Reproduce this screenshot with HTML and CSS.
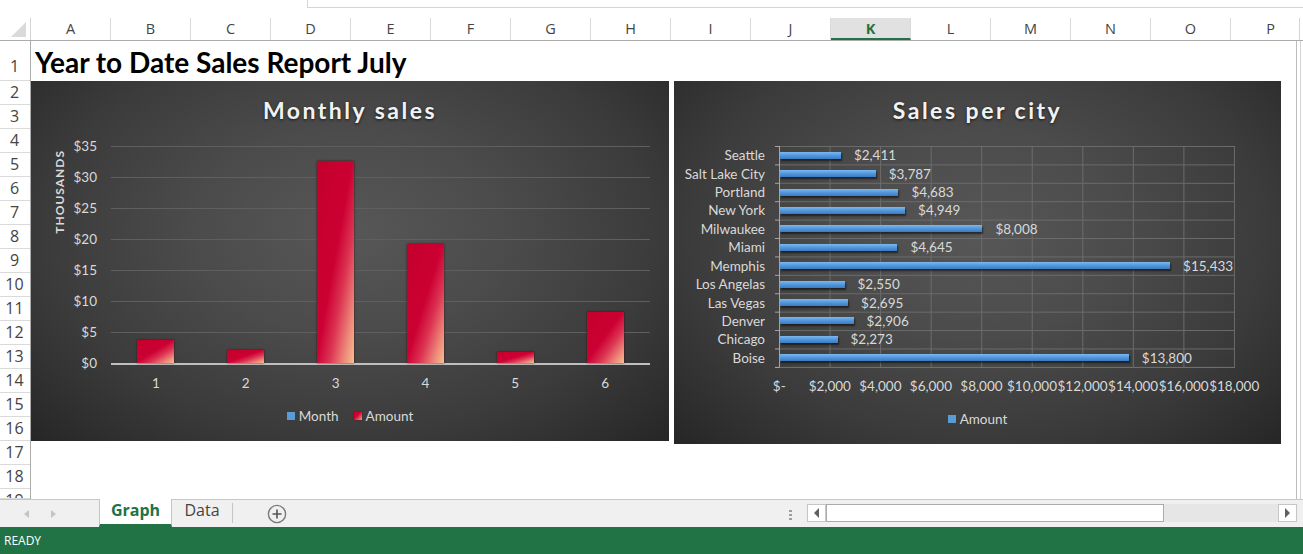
FILE: index.html
```html
<!DOCTYPE html>
<html lang="en">
<head>
<meta charset="utf-8">
<title>Year to Date Sales Report July</title>
<link rel="stylesheet" href="styles.css">
</head>
<body>
<div class="app">
  <div class="formula"><div class="formula-box"></div></div>

  <div class="colheads">
    <div class="corner"><span class="corner-tri"></span></div>
    <div class="cols">
      <div class="col">A</div><div class="col">B</div><div class="col">C</div><div class="col">D</div>
      <div class="col">E</div><div class="col">F</div><div class="col">G</div><div class="col">H</div>
      <div class="col">I</div><div class="col">J</div><div class="col sel">K</div><div class="col">L</div>
      <div class="col">M</div><div class="col">N</div><div class="col">O</div><div class="col">P</div>
    </div>
    <div class="vs-head"></div>
  </div>

  <div class="main">
    <div class="rowheads">
      <div class="rh r1">1</div><div class="rh">2</div><div class="rh">3</div><div class="rh">4</div>
      <div class="rh">5</div><div class="rh">6</div><div class="rh">7</div><div class="rh">8</div>
      <div class="rh">9</div><div class="rh">10</div><div class="rh">11</div><div class="rh">12</div>
      <div class="rh">13</div><div class="rh">14</div><div class="rh">15</div><div class="rh">16</div>
      <div class="rh">17</div><div class="rh">18</div><div class="rh rh-cut">19</div>
    </div>

    <div class="sheet">
      <div class="title-row">Year to Date Sales Report July</div>
      <div class="charts">
        <section class="chart chart-left">
          <h2 class="chart-title">Monthly sales</h2>
          <div class="lc-body">
            <div class="axis-title">THOUSANDS</div>
            <div class="y-labels">
              <span>$35</span><span>$30</span><span>$25</span><span>$20</span>
              <span>$15</span><span>$10</span><span>$5</span><span>$0</span>
            </div>
            <div class="lc-plot">
              <div class="slot"><div class="col-bar" style="height:23px"></div></div>
              <div class="slot"><div class="col-bar" style="height:13px"></div></div>
              <div class="slot"><div class="col-bar" style="height:202px"></div></div>
              <div class="slot"><div class="col-bar" style="height:119px"></div></div>
              <div class="slot"><div class="col-bar" style="height:11px"></div></div>
              <div class="slot"><div class="col-bar" style="height:51px"></div></div>
            </div>
          </div>
          <div class="lc-xlabels">
            <span>1</span><span>2</span><span>3</span><span>4</span><span>5</span><span>6</span>
          </div>
          <div class="legend">
            <span class="lg-item"><i class="sw sw-blue"></i>Month</span>
            <span class="lg-item"><i class="sw sw-red"></i>Amount</span>
          </div>
        </section>

        <section class="chart chart-right">
          <h2 class="chart-title">Sales per city</h2>
          <div class="rc-body">
            <div class="rc-cats">
              <span>Seattle</span><span>Salt Lake City</span><span>Portland</span><span>New York</span>
              <span>Milwaukee</span><span>Miami</span><span>Memphis</span><span>Los Angelas</span>
              <span>Las Vegas</span><span>Denver</span><span>Chicago</span><span>Boise</span>
            </div>
            <div class="rc-ticks"></div>
            <div class="rc-plot">
              <div class="rc-row"><div class="hbar" style="width:60.9px"></div><span class="val">$2,411</span></div>
              <div class="rc-row"><div class="hbar" style="width:95.7px"></div><span class="val">$3,787</span></div>
              <div class="rc-row"><div class="hbar" style="width:118.4px"></div><span class="val">$4,683</span></div>
              <div class="rc-row"><div class="hbar" style="width:125.1px"></div><span class="val">$4,949</span></div>
              <div class="rc-row"><div class="hbar" style="width:202.4px"></div><span class="val">$8,008</span></div>
              <div class="rc-row"><div class="hbar" style="width:117.4px"></div><span class="val">$4,645</span></div>
              <div class="rc-row"><div class="hbar" style="width:390.1px"></div><span class="val">$15,433</span></div>
              <div class="rc-row"><div class="hbar" style="width:64.5px"></div><span class="val">$2,550</span></div>
              <div class="rc-row"><div class="hbar" style="width:68.1px"></div><span class="val">$2,695</span></div>
              <div class="rc-row"><div class="hbar" style="width:73.5px"></div><span class="val">$2,906</span></div>
              <div class="rc-row"><div class="hbar" style="width:57.5px"></div><span class="val">$2,273</span></div>
              <div class="rc-row"><div class="hbar" style="width:348.8px"></div><span class="val">$13,800</span></div>
            </div>
          </div>
          <div class="rc-xlabels">
            <span>$-</span><span>$2,000</span><span>$4,000</span><span>$6,000</span><span>$8,000</span>
            <span>$10,000</span><span>$12,000</span><span>$14,000</span><span>$16,000</span><span>$18,000</span>
          </div>
          <div class="legend">
            <span class="lg-item"><i class="sw sw-blue"></i>Amount</span>
          </div>
        </section>
      </div>
    </div>

    <div class="vscroll"></div>
  </div>

  <div class="tabbar">
    <div class="tab-nav">
      <span class="nav-arrow nav-left"></span>
      <span class="nav-arrow nav-right"></span>
    </div>
    <div class="tab active">Graph</div>
    <div class="tab">Data</div>
    <div class="add-sheet">
      <svg width="20" height="20" viewBox="0 0 20 20" aria-hidden="true">
        <circle cx="10" cy="10" r="8.6" fill="none" stroke="#7a7a7a" stroke-width="1.4"/>
        <path d="M10 5.5v9M5.5 10h9" stroke="#555" stroke-width="1.6"/>
      </svg>
    </div>
    <div class="tab-spacer"></div>
    <div class="split-dots"></div>
    <div class="hscroll">
      <div class="hs-btn"><span class="hs-arrow hs-left"></span></div>
      <div class="hs-thumb"></div>
      <div class="hs-track"></div>
      <div class="hs-btn"><span class="hs-arrow hs-right"></span></div>
    </div>
  </div>

  <div class="status">READY</div>
</div>
</body>
</html>
```

FILE: styles.css
```css
* { box-sizing: border-box; }
html, body { margin: 0; padding: 0; }
body {
  width: 1303px;
  height: 554px;
  overflow: hidden;
  background: #fff;
  font-family: "Open Sans", "Noto Sans", "Liberation Sans", sans-serif;
  color: #444;
}
.app { display: flex; flex-direction: column; height: 554px; }

/* formula strip */
.formula { height: 18px; }
.formula-box {
  margin-left: 307px;
  height: 8px;
  border-left: 1px solid #d4d4d4;
  border-bottom: 1px solid #d4d4d4;
}

/* column headers */
.colheads {
  display: flex;
  height: 23px;
  border-bottom: 1px solid #ababab;
}
.corner {
  width: 31px;
  flex: none;
  border-right: 1px solid #d4d4d4;
  display: flex;
  justify-content: flex-end;
  align-items: flex-end;
  padding: 0 4px 3px 0;
}
.corner-tri {
  width: 15px;
  height: 15px;
  background: #dadada;
  clip-path: polygon(100% 0, 100% 100%, 0 100%);
}
.cols { display: flex; width: 1266px; overflow: hidden; flex: none; }
.col {
  flex: none;
  width: 80px;
  border-right: 1px solid #dadada;
  text-align: center;
  font-size: 14.5px;
  line-height: 22px;
  color: #444;
}
.col.sel {
  background: #e1e1e1;
  color: #217346;
  font-weight: 700;
  border-bottom: 2px solid #217346;
  line-height: 21px;
}
.vs-head { flex: 1; border-left: 1px solid #d4d4d4; margin-left: 2px; }

/* main grid */
.main { display: flex; height: 458px; overflow: hidden; }
.rowheads {
  width: 31px;
  flex: none;
  border-right: 1px solid #ababab;
  overflow: hidden;
}
.rh {
  height: 24px;
  border-bottom: 1px solid #dadada;
  text-align: center;
  font-size: 16px;
  line-height: 23px;
  color: #444;
  padding-right: 1px;
}
.rh.r1 {
  height: 40px;
  display: flex;
  align-items: flex-end;
  justify-content: center;
  line-height: 22px;
  padding-bottom: 3px;
}
.rh.rh-cut { height: 10px; overflow: hidden; }
.sheet {
  width: 1266px;
  flex: none;
  border-right: 1px solid #bdbdbd;
}
.vscroll { flex: 1; border-left: 1px solid #d4d4d4; margin-left: 3px; }

.title-row {
  height: 40px;
  display: flex;
  align-items: flex-end;
  padding: 0 0 4px 4px;
  font-family: Lato, "Liberation Sans", sans-serif;
  font-weight: 700;
  font-size: 28px;
  line-height: 30px;
  color: #000;
  white-space: nowrap;
}

.charts { display: flex; align-items: flex-start; gap: 5px; }

/* charts */
.chart {
  flex: none;
  background: radial-gradient(ellipse farthest-corner at 50% 42%, #575757 0%, #4b4b4b 35%, #3b3b3b 68%, #262626 100%);
  color: #d9d9d9;
  font-family: Lato, "Liberation Sans", sans-serif;
  font-size: 13.5px;
  line-height: 16px;
}
.chart-left { width: 638px; height: 360px; }
.chart-right { width: 607px; height: 363px; }
.chart-title {
  margin: 0;
  padding-top: 14px;
  height: 44px;
  text-align: center;
  font-size: 23px;
  line-height: 30px;
  font-weight: 700;
  letter-spacing: 2.5px;
  color: #f2f2f2;
  text-shadow: 0 1px 3px rgba(0, 0, 0, 0.7);
}

/* left chart */
.lc-body {
  display: flex;
  margin-top: 21px;
  padding-left: 23px;
  height: 219px;
}
.axis-title {
  width: 12px;
  writing-mode: vertical-rl;
  transform: rotate(180deg);
  align-self: flex-start;
  margin-top: 4px;
  font-size: 12px;
  line-height: 12px;
  font-weight: 700;
  letter-spacing: 1px;
  color: #d9d9d9;
}
.y-labels {
  width: 31px;
  display: flex;
  flex-direction: column;
  gap: 15px;
  margin-top: -8px;
  text-align: right;
  align-self: flex-start;
}
.lc-plot {
  margin-left: 14px;
  width: 539px;
  height: 219px;
  display: flex;
  align-items: flex-end;
  border-bottom: 2px solid #bfbfbf;
  background: repeating-linear-gradient(to bottom, #5f5f5f 0 1px, transparent 1px 31px);
}
.slot { flex: 1; display: flex; justify-content: center; align-items: flex-end; }
.col-bar {
  width: 37px;
  background: linear-gradient(to bottom right, #c4002c 0%, #cc0033 48%, #dc3352 66%, #ee8a7a 86%, #f7c08e 100%);
  box-shadow: 0 0 2px rgba(60, 0, 10, 0.8);
}
.lc-xlabels {
  display: flex;
  margin: 10px 0 0 80px;
  width: 539px;
}
.lc-xlabels span { flex: 1; text-align: center; }

.legend {
  display: flex;
  justify-content: center;
  gap: 15px;
  margin-top: 17px;
}
.lg-item { display: flex; align-items: center; gap: 4px; }
.sw { display: block; width: 8px; height: 8px; }
.sw-blue { background: #5b9bd5; }
.sw-red { background: linear-gradient(to bottom right, #cc0033 40%, #f0a080 100%); box-shadow: 0 0 1px #600; }

/* right chart */
.rc-body {
  display: flex;
  margin-top: 21px;
  padding-left: 8px;
  height: 222px;
}
.rc-cats {
  width: 83px;
  height: 221px;
  display: grid;
  grid-template-rows: repeat(12, 1fr);
  text-align: right;
  align-items: center;
  white-space: nowrap;
}
.rc-ticks {
  width: 4px;
  height: 222px;
  margin-left: 10px;
  background: linear-gradient(to bottom, #a6a6a6 0 1px, transparent 1px) 0 0 / 100% calc(221px / 12) repeat-y;
  border-bottom: 1px solid #a6a6a6;
}
.rc-plot {
  width: 456px;
  height: 222px;
  display: grid;
  grid-template-rows: repeat(12, 1fr);
  border-left: 1px solid #a6a6a6;
  border-bottom: 1px solid #6e6e6e;
  background:
    linear-gradient(to left, #6b6b6b 0 1px, transparent 1px) 0 0 / calc(455px / 9) 100% repeat-x,
    linear-gradient(to bottom, #6b6b6b 0 1px, transparent 1px) 0 0 / 100% calc(221px / 12) repeat-y;
}
.rc-row { display: flex; align-items: center; }
.hbar {
  height: 7px;
  background: linear-gradient(to bottom, #7ab8f0 0%, #4f94da 55%, #3a7cc4 100%);
  box-shadow: 1px 2px 2px rgba(0, 0, 0, 0.55);
}
.val { margin-left: 13px; white-space: nowrap; }
.rc-xlabels {
  display: flex;
  margin: 10px 0 0 80px;
}
.rc-xlabels span {
  width: calc(455px / 9);
  flex: none;
  display: flex;
  justify-content: center;
  white-space: nowrap;
}

/* sheet tabs */
.tabbar {
  height: 28px;
  display: flex;
  align-items: stretch;
  background: #f0f0f0;
  border-top: 1px solid #c6c6c6;
}
.tab-nav { width: 99px; flex: none; display: flex; align-items: center; padding-left: 24px; gap: 22px; }
.nav-arrow { width: 0; height: 0; border-top: 4px solid transparent; border-bottom: 4px solid transparent; }
.nav-left { border-right: 5px solid #c4c4c4; }
.nav-right { border-left: 5px solid #c4c4c4; }
.tab {
  flex: none;
  display: flex;
  align-items: center;
  justify-content: center;
  font-size: 16px;
  color: #444;
}
.tab.active {
  width: 73px;
  margin-top: -1px;
  background: #fff;
  border-left: 1px solid #c6c6c6;
  border-right: 1px solid #c6c6c6;
  border-bottom: 3px solid #217346;
  color: #217346;
  font-weight: 700;
  padding-bottom: 3px;
}
.tab:not(.active) {
  width: 61px;
  margin: 3px 0 4px;
  border-right: 1px solid #c6c6c6;
  padding-bottom: 6px;
}
.add-sheet { display: flex; align-items: center; margin-left: 34px; }
.add-sheet svg { display: block; }
.tab-spacer { flex: 1; }
.split-dots {
  width: 3px;
  margin: 9px 15px 0 0;
  height: 11px;
  background: radial-gradient(circle, #9a9a9a 1.1px, transparent 1.4px) 0 0 / 3px 4px repeat-y;
}
.hscroll {
  width: 490px;
  flex: none;
  height: 18px;
  margin: 4px 6px 0 0;
  display: flex;
}
.hs-btn {
  width: 19px;
  flex: none;
  background: #fff;
  border: 1px solid #c6c6c6;
  display: flex;
  align-items: center;
  justify-content: center;
}
.hs-arrow { width: 0; height: 0; border-top: 5px solid transparent; border-bottom: 5px solid transparent; }
.hs-left { border-right: 5px solid #606060; }
.hs-right { border-left: 5px solid #606060; }
.hs-thumb { width: 338px; flex: none; background: #fff; border: 1px solid #ababab; }
.hs-track { flex: 1; background: #e6e6e6; }

/* status bar */
.status {
  height: 27px;
  background: #217346;
  color: #fff;
  font-size: 12px;
  line-height: 28px;
  padding-left: 4px;
}
```
